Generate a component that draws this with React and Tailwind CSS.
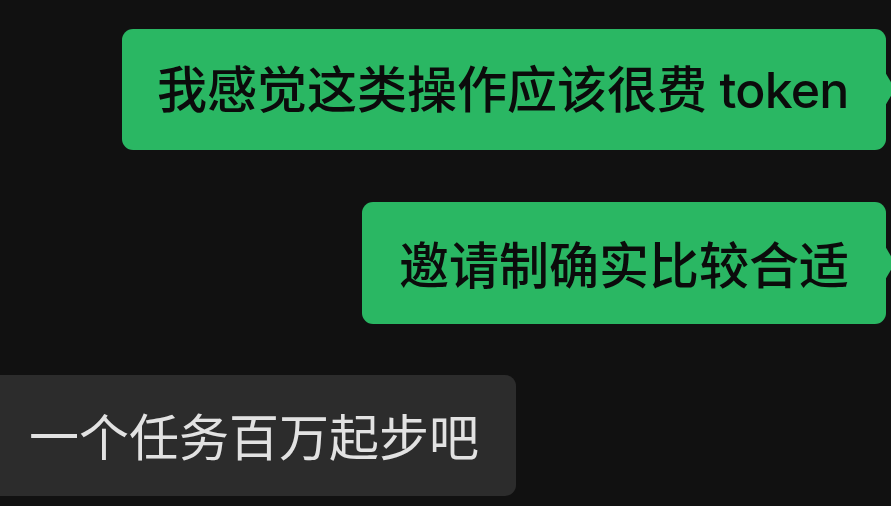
export default function App() {
  const font = { fontFamily: '"Noto Sans CJK SC", "Noto Sans", sans-serif' };
  return (
    <div className="w-[891px] h-[506px] bg-[#111111] overflow-hidden flex flex-col pt-[29px]" style={font}>
      <div className="flex justify-end pr-[5px]">
        <div className="relative w-[764px] h-[121px] rounded-[11px] bg-[#2ab763] flex items-center pl-[35px] pb-[3px] text-[50px] font-medium text-[#0b0b0b] leading-none whitespace-nowrap">
          <span>
            我感觉这类操作应该很费<span className="font-['Inter',sans-serif] font-medium tracking-[-0.8px] whitespace-pre"> token</span>
          </span>
          <div className="absolute right-[-9px] top-[43px] w-0 h-0 border-y-[17px] border-y-transparent border-l-[10px] border-l-[#2ab763]" />
        </div>
      </div>
      <div className="flex justify-end pr-[5px] mt-[52px]">
        <div className="relative w-[524px] h-[122px] rounded-[11px] bg-[#2ab763] flex items-center pl-[37px] pb-[3px] text-[50px] font-medium text-[#0b0b0b] leading-none whitespace-nowrap">
          邀请制确实比较合适
          <div className="absolute right-[-9px] top-[44px] w-0 h-0 border-y-[17px] border-y-transparent border-l-[10px] border-l-[#2ab763]" />
        </div>
      </div>
      <div className="flex mt-[51px] ml-[-20px]">
        <div className="w-[536px] h-[121px] rounded-[11px] bg-[#2c2c2c] flex items-center pl-[49px] pb-[3px] text-[50px] text-[#e2e2e2] leading-none whitespace-nowrap">
          一个任务百万起步吧
        </div>
      </div>
    </div>
  );
}
